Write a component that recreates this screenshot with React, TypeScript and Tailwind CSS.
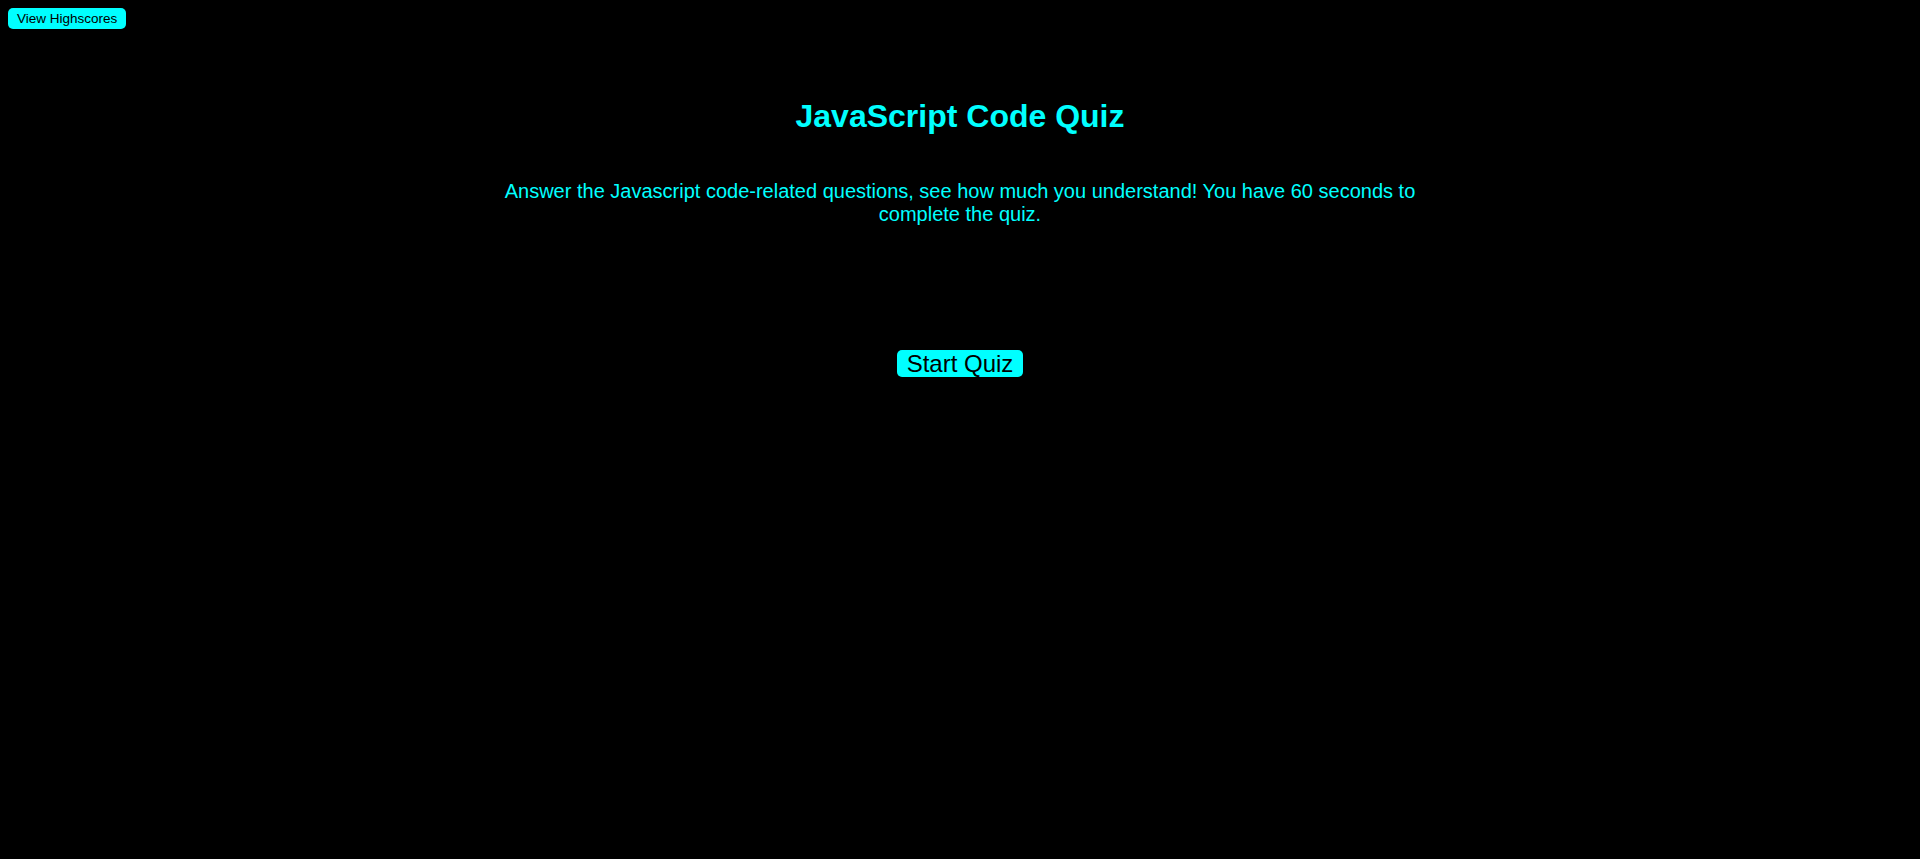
const App = () => {
  return (
    <div className="min-h-screen bg-black font-['Liberation_Sans',Arial,sans-serif]">
      {/* Header */}
      <header className="flex pl-2 pt-2">
        <button className="h-[21px] rounded-[5px] bg-[#00ffff] px-[9px] text-[13.5px] leading-none text-black">
          View Highscores
        </button>
      </header>

      {/* Intro */}
      <main className="mx-auto flex w-[960px] flex-col items-center text-center">
        <h1 className="mt-[69px] text-[32px] font-bold leading-[37px] text-[#00ffff]">
          JavaScript Code Quiz
        </h1>
        <p className="mt-[45px] text-[20px] leading-[23px] text-[#00ffff]">
          Answer the Javascript code-related questions, see how much you understand! You have 60 seconds to
          complete the quiz.
        </p>
        <button className="mt-[124px] h-[27px] rounded-[5px] bg-[#00ffff] px-[10px] text-[24px] leading-none text-black">
          Start Quiz
        </button>
      </main>
    </div>
  );
};

export default App;
